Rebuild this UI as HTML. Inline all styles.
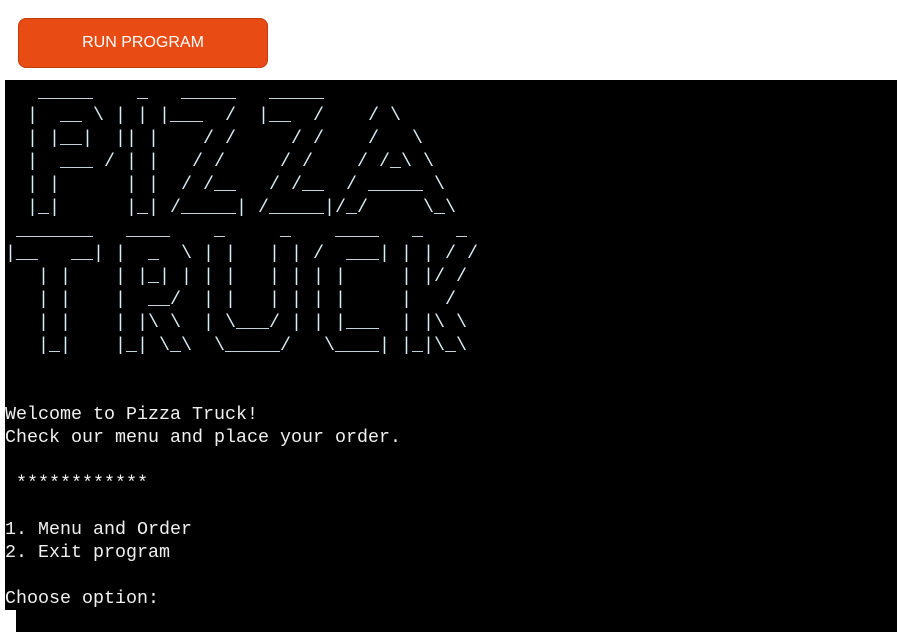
<!DOCTYPE html>
<html><head><meta charset="utf-8"><style>
html,body{margin:0;padding:0;background:#fff;width:900px;height:636px;overflow:hidden}
.btn{position:absolute;left:18px;top:18px;background:#e84b13;border:1px solid #c23c0c;border-radius:8px;color:#fff;font:16px "Liberation Sans",sans-serif;display:flex;align-items:center;justify-content:center;box-sizing:border-box;width:250px;height:50px}
.term{position:absolute;left:5px;top:80px;width:892px;height:552px;background:#000}
pre{margin:0;position:absolute;left:0;top:1px;font-family:"Liberation Mono","Courier New",monospace;font-size:18.33px;line-height:23px;color:#f0f0f0;white-space:pre}
.cur{position:absolute;left:0;top:530px;width:11px;height:22px;background:#fff}
</style></head><body>
<div class="btn">RUN PROGRAM</div>
<div class="term">
<pre style="color:#d8ecf5">   _____    _   _____   _____
  |  __ \ | | |___  /  |__  /    / \
  | |__|  || |    / /     / /    /   \
  |  ___ / | |   / /     / /    / /_\ \
  | |      | |  / /__   / /__  / _____ \
  |_|      |_| /_____| /_____|/_/     \_\
 _______   ____    _     _    ____   _   _
|__   __| |  _  \ | |   | | /  ___| | | / /
   | |    | |_| | | |   | | | |     | |/ /
   | |    |  __/  | |   | | | |     |   /
   | |    | |\ \  | \___/ | | |___  | |\ \
   |_|    |_| \_\  \_____/   \____| |_|\_\


<span style="color:#f0f0f0">Welcome to Pizza Truck!
Check our menu and place your order.

 ************

1. Menu and Order
2. Exit program

Choose option:</span></pre>
<div class="cur"></div>
</div>
</body></html>
